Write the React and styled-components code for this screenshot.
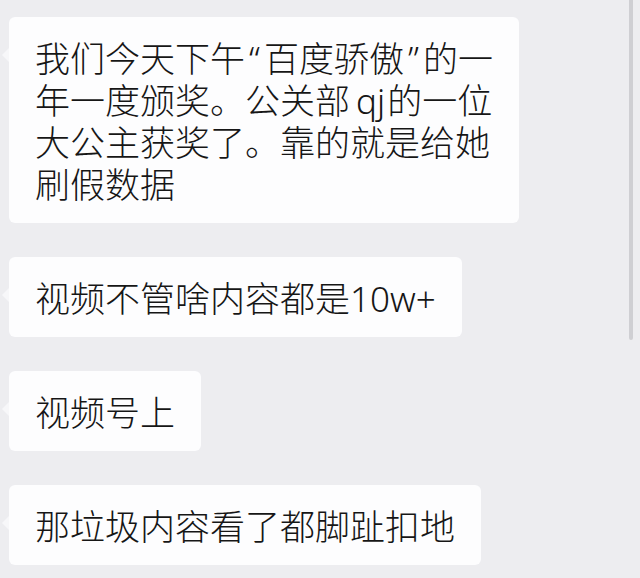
import React from 'react'
import styled, { createGlobalStyle } from 'styled-components'

const GlobalStyle = createGlobalStyle`
  html, body {
    margin: 0;
    padding: 0;
    background: #ededf0;
  }
  body {
    font-family: "Noto Sans CJK SC", "Noto Sans", sans-serif;
  }
`

const Chat = () => {
  const messages = [
    [
      <>我们今天下午<Quote>“</Quote>百度骄傲<Quote>”</Quote>的一</>,
      <>年一度颁奖。公关部<Latin spaced>qj</Latin>的一位</>,
      '大公主获奖了。靠的就是给她',
      '刷假数据',
    ],
    [<>视频不管啥内容都是<Latin>10w+</Latin></>],
    ['视频号上'],
    ['那垃圾内容看了都脚趾扣地'],
  ]

  return (
    <ChatWrapper>
      <GlobalStyle />
      <MessageList>
        {messages.map((lines, i) => (
          <Row key={i}>
            <Bubble>
              {lines.map((line, j) => (
                <Line key={j}>{line}</Line>
              ))}
            </Bubble>
          </Row>
        ))}
      </MessageList>
      <ScrollThumb />
    </ChatWrapper>
  )
}

export default Chat

const ChatWrapper = styled.div`
  position: relative;
  width: 640px;
  height: 578px;
  overflow: hidden;
  background: #ededf0;
`

const MessageList = styled.div`
  display: flex;
  flex-direction: column;
  align-items: flex-start;
  gap: 34px;
  padding: 17px 0 0 9px;
`

const Row = styled.div`
  display: flex;
`

const Bubble = styled.div`
  position: relative;
  background: #fdfdfe;
  border-radius: 6px;
  padding: 19px 26px;
  color: #161616;
  font-size: 35px;
  font-weight: 300;
  line-height: 42px;

  &::before {
    content: '';
    position: absolute;
    left: -7px;
    top: 31px;
    border-top: 7px solid transparent;
    border-bottom: 7px solid transparent;
    border-right: 7px solid #f7f7f9;
  }
`

const Line = styled.div`
  height: 42px;
  white-space: nowrap;
`

const Quote = styled.span`
  font-family: "Noto Sans", sans-serif;
  display: inline-block;
  width: 19px;
  line-height: 1;
  text-align: center;
`

const Latin = styled.span`
  font-family: "Noto Sans", sans-serif;
  font-weight: 300;
  line-height: 1;
  margin-left: ${props => (props.spaced ? '6px' : '0')};
  margin-right: ${props => (props.spaced ? '2px' : '0')};
`

const ScrollThumb = styled.div`
  position: absolute;
  top: 0;
  right: 7px;
  width: 4px;
  height: 340px;
  border-radius: 0 0 3px 3px;
  background: #cfcfd3;
`
